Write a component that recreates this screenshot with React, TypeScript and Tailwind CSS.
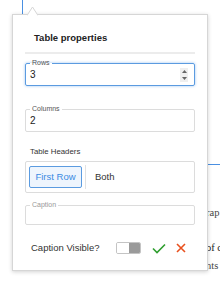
import React from "react";

function Spinner() {
  return (
    <div className="flex h-[14px] w-[8px] flex-col items-center justify-center gap-[4px] bg-[#efefef]">
      <svg width="5" height="3" viewBox="0 0 5 3"><path d="M0 3 L2.5 0 L5 3 Z" fill="#666" /></svg>
      <svg width="5" height="3" viewBox="0 0 5 3"><path d="M0 0 L2.5 3 L5 0 Z" fill="#666" /></svg>
    </div>
  );
}

export default function App() {
  return (
    <div
      className="relative h-[285px] w-[220px] overflow-hidden bg-white"
      style={{ fontFamily: '"Liberation Sans", Arial, sans-serif' }}
    >
      {/* background document */}
      <div className="absolute left-[22px] top-0 h-[15px] w-[1px] bg-[#4a90e2]" />
      <div className="absolute left-[208px] top-[164px] h-[1px] w-[12px] bg-[#4a90e2]" />
      <div
        className="absolute left-[206px] top-[206px] flex flex-col whitespace-nowrap text-[10.5px] text-[#444]"
        style={{ fontFamily: '"Liberation Serif", "Times New Roman", serif' }}
      >
        <span className="leading-[14px]">rap</span>
        <span className="mt-[21px] leading-[14px] text-[#222]">of c</span>
        <span className="mt-[4px] leading-[14px]">nts</span>
      </div>

      {/* popover */}
      <div className="absolute left-[12px] top-[14px] h-[257px] w-[196px] border border-[#d6d6d6] bg-white px-[12px] shadow-[0_1px_4px_rgba(0,0,0,0.18)]">
        <svg
          className="absolute left-[14px] top-[-9px]"
          width="11"
          height="10"
          viewBox="0 0 11 10"
        >
          <path d="M0 9.5 L5.5 1 L11 9.5" fill="white" stroke="#d6d6d6" strokeWidth="1" />
          <rect x="1" y="9" width="9" height="2" fill="white" />
        </svg>

        <div className="pl-[9px] pt-[16px] text-[9.5px] font-bold leading-[14px] text-[#222]">
          Table properties
        </div>
        <div className="mt-[7px] h-[2px] bg-[#ececec]" />

        {/* Rows */}
        <fieldset className="mt-[5px] rounded-[2px] border border-[#5b9be0] shadow-[0_0_3px_#9cc3f0]">
          <legend className="ml-[4px] px-[2px] text-[7px] leading-[8px] text-[#555]">Rows</legend>
          <div className="flex items-center justify-between pb-[3px] pl-[4px] pr-[6px] pt-[1px]">
            <span className="text-[10px] leading-[14px] text-[#222]">3</span>
            <Spinner />
          </div>
        </fieldset>

        {/* Columns */}
        <fieldset className="mt-[19px] rounded-[2px] border border-[#dcdcdc]">
          <legend className="ml-[4px] px-[2px] text-[7px] leading-[8px] text-[#555]">Columns</legend>
          <div className="pb-[3px] pl-[4px] pt-[1px] text-[10px] leading-[14px] text-[#222]">2</div>
        </fieldset>

        <div className="mt-[15px] pl-[5px] text-[7.8px] leading-[10px] text-[#333]">Table Headers</div>

        <div className="mt-[4px] flex items-center rounded-[2px] border border-[#dcdcdc] p-[3px]">
          <div className="flex h-[22px] w-[53px] items-center justify-center rounded-[2px] border border-[#5b9be0] bg-[#eef5fd] text-[9.5px] text-[#3b8be3]">
            First Row
          </div>
          <div className="ml-[3px] h-[24px] w-[1px] bg-[#e2e2e2]" />
          <div className="ml-[9px] text-[9.5px] text-[#333]">Both</div>
        </div>

        {/* Caption */}
        <fieldset className="mt-[8px] rounded-[2px] border border-[#dcdcdc]">
          <legend className="ml-[4px] px-[2px] text-[7px] leading-[8px] text-[#999]">Caption</legend>
          <div className="h-[15px]" />
        </fieldset>

        <div className="mt-[16px] flex h-[14px] items-center">
          <span className="ml-[6px] text-[9.5px] text-[#333]">Caption Visible?</span>
          <div className="ml-[17px] flex h-[12px] w-[25px] overflow-hidden rounded-[2px] border border-[#c4c4c4]">
            <div className="flex-1 bg-white" />
            <div className="flex-1 bg-[#9a9a9a]" />
          </div>
          <svg className="ml-[11px]" width="14" height="11" viewBox="0 0 14 11">
            <path d="M1 5.5 L5 9.5 L13 1.5" fill="none" stroke="#2f9e2f" strokeWidth="1.6" />
          </svg>
          <svg className="ml-[10px]" width="10" height="10" viewBox="0 0 10 10">
            <path d="M1 1 L9 9 M9 1 L1 9" fill="none" stroke="#e8501e" strokeWidth="1.6" />
          </svg>
        </div>
      </div>
    </div>
  );
}
